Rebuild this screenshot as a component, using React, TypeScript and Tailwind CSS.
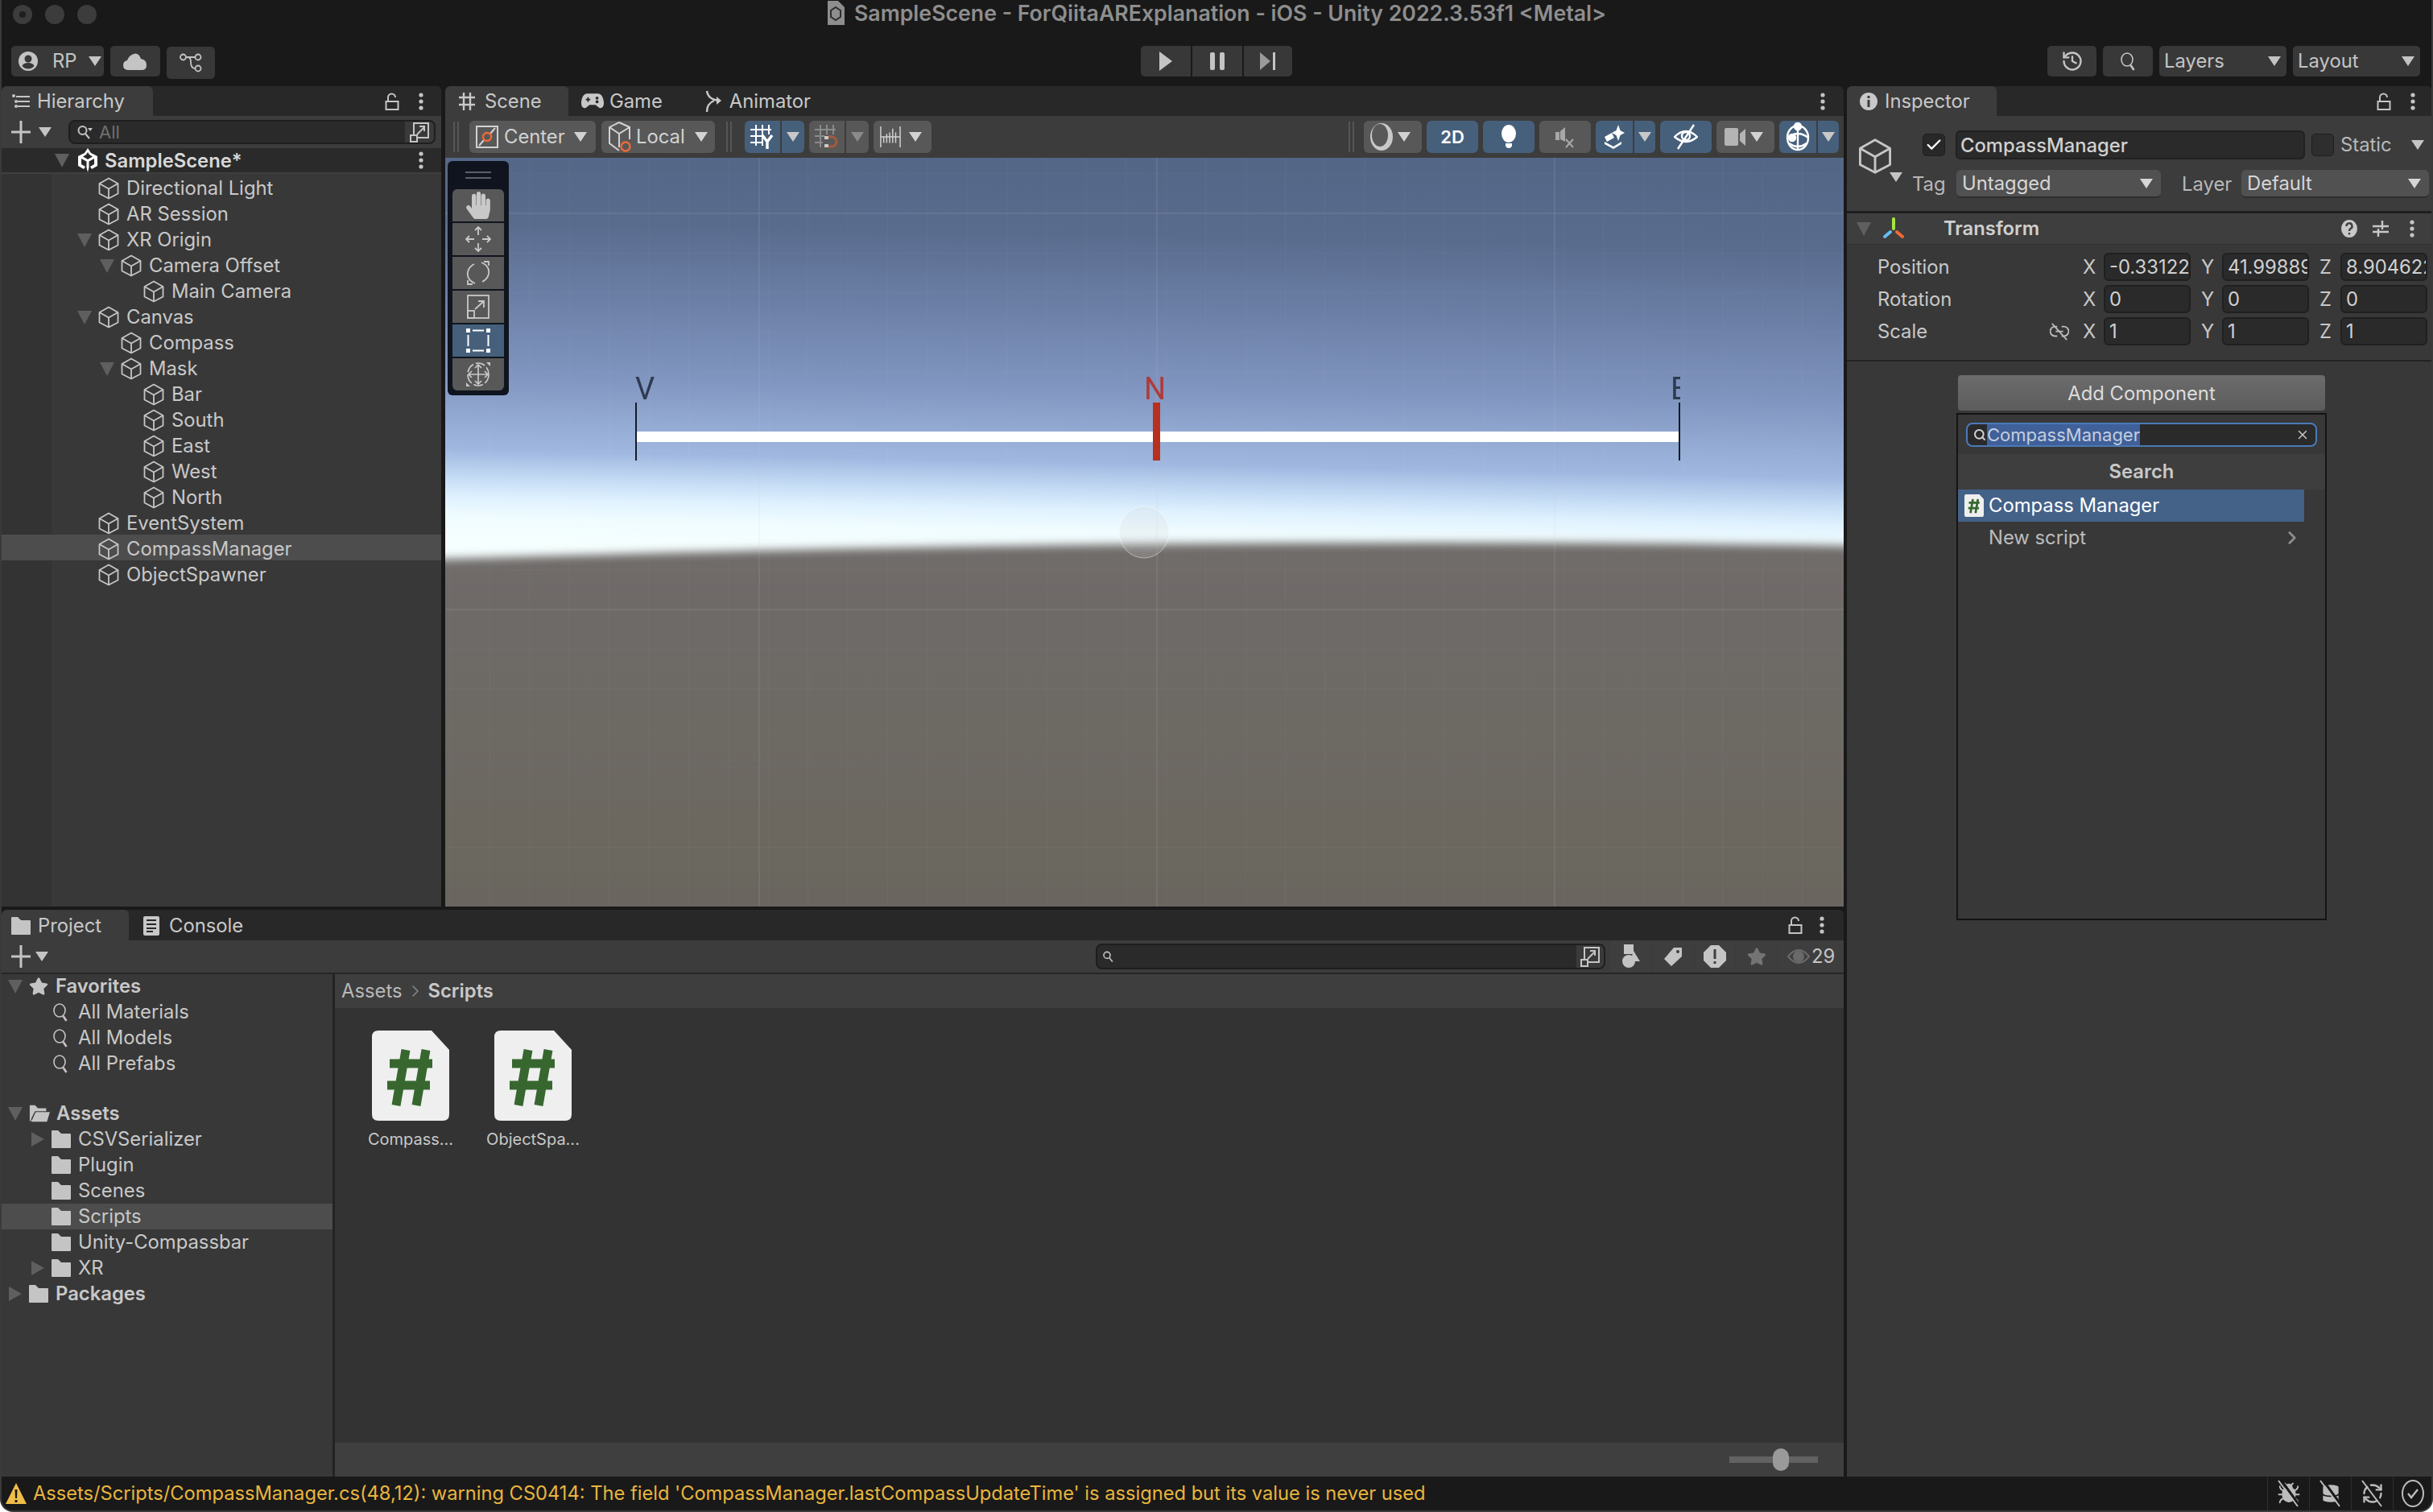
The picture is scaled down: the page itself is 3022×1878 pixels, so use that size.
import { Bug, Check, ChevronRight, Database, History, RefreshCw, Search, X } from "lucide-react";
import type { ReactNode } from "react";
import { FaHandPaper, FaStar } from "react-icons/fa";

const Caret = ({ className = "" }: { className?: string }) => (
  <svg viewBox="0 0 16 12" className={`w-[16px] h-[12px] shrink-0 ${className}`}>
    <path d="M0 0H16L8 12Z" fill="currentColor" />
  </svg>
);

const FoldDown = ({ className = "" }: { className?: string }) => (
  <svg viewBox="0 0 18 18" className={`w-[18px] h-[18px] shrink-0 text-[#5f5f5f] ${className}`}>
    <path d="M0 1H18L9 18Z" fill="currentColor" />
  </svg>
);

const FoldRight = ({ className = "" }: { className?: string }) => (
  <svg viewBox="0 0 18 18" className={`w-[18px] h-[18px] shrink-0 text-[#5f5f5f] ${className}`}>
    <path d="M1 0L17 9L1 18Z" fill="currentColor" />
  </svg>
);

const Kebab = ({ className = "" }: { className?: string }) => (
  <svg viewBox="0 0 6 24" className={`w-[6px] h-[24px] shrink-0 text-[#c4c4c4] ${className}`}>
    <circle cx="3" cy="4" r="2.6" fill="currentColor" />
    <circle cx="3" cy="12" r="2.6" fill="currentColor" />
    <circle cx="3" cy="20" r="2.6" fill="currentColor" />
  </svg>
);

const Lock = () => (
  <svg viewBox="0 0 18 22" className="w-[18px] h-[22px] shrink-0 text-[#c4c4c4]" fill="none" stroke="currentColor" strokeWidth="2">
    <rect x="1.5" y="11" width="15" height="10" />
    <path d="M4 11V6a4.5 4.5 0 0 1 9 0" />
  </svg>
);

const Plus = () => (
  <svg viewBox="0 0 24 28" className="w-[24px] h-[28px] shrink-0 text-[#c4c4c4]">
    <path d="M10.5 0h3v12.5H24v3H13.5V28h-3V15.5H0v-3h10.5z" fill="currentColor" />
  </svg>
);

const Cube = ({ className = "w-[26px] h-[28px]" }: { className?: string }) => (
  <svg viewBox="0 0 26 28" className={`shrink-0 text-[#c6c6c6] ${className}`} fill="none" stroke="currentColor" strokeWidth="1.8" strokeLinejoin="round">
    <path d="M13 1.5L24.5 8V20.5L13 26.5L1.5 20.5V8Z" />
    <path d="M1.5 8L13 14.5L24.5 8M13 14.5V26.5" />
  </svg>
);

const UnityLogo = () => (
  <svg viewBox="0 0 26 30" className="w-[26px] h-[30px] shrink-0 text-white">
    <path
      d="M13 0L17 6L25 10V22L18 26L16 23L21 20V13L14.5 16.5V24L13 30L11.5 24V16.5L5 13V20L10 23L8 26L1 22V10L9 6ZM13 5L11 8L7 10.5L13 14L19 10.5L15 8Z"
      fill="currentColor"
    />
  </svg>
);

const FindIcon = ({ caret = false, className = "w-[20px] h-[20px]" }: { caret?: boolean; className?: string }) => (
  <svg viewBox="0 0 20 20" className={`shrink-0 text-[#c4c4c4] ${className}`} fill="none" stroke="currentColor" strokeWidth="2">
    <circle cx="7.5" cy="8" r="5" />
    <path d="M11 12l5 6" />
    {caret && <path d="M14 5h6l-3 4z" fill="currentColor" stroke="none" />}
  </svg>
);

const ThinFind = () => (
  <svg viewBox="0 0 18 24" className="w-[22px] h-[24px] shrink-0 text-[#c4c4c4]" fill="none" stroke="currentColor" strokeWidth="1.6">
    <ellipse cx="8" cy="10" rx="7" ry="8" />
    <path d="M12.5 17l4 6" strokeWidth="2.6" />
  </svg>
);

const PopOut = () => (
  <svg viewBox="0 0 24 26" className="w-[24px] h-[26px] shrink-0 text-[#c4c4c4]" fill="none" stroke="currentColor" strokeWidth="2">
    <path d="M5 16V2h18v18H9" />
    <rect x="1" y="17" width="8" height="8" />
    <path d="M9 16L18 7M12 6h6v6" />
  </svg>
);

const Folder = ({ className = "" }: { className?: string }) => (
  <svg viewBox="0 0 24 24" className={`w-[24px] h-[24px] shrink-0 text-[#c4c4c4] ${className}`}>
    <path d="M0 2q0-1 1-1h7l4 4h11q1 0 1 1v16q0 1-1 1H1q-1 0-1-1z" fill="currentColor" />
  </svg>
);

const FolderOpen = () => (
  <svg viewBox="0 0 28 24" className="w-[26px] h-[24px] shrink-0 text-[#c4c4c4]">
    <path d="M1 1h7l4 4h11v4H8L3 19V22H1z" fill="currentColor" />
    <path d="M9 10h19l-4 13H3z" fill="currentColor" />
  </svg>
);

const CSharpFile = ({ className = "w-[96px] h-[112px]" }: { className?: string }) => (
  <svg viewBox="0 0 96 112" className={`shrink-0 ${className}`}>
    <path d="M8 0H74L96 24V104q0 8-8 8H8q-8 0-8-8V8q0-8 8-8Z" fill="#efefef" />
    <path d="M42 24L30 93M67 24L55 93M22 41H75M19 68H72" stroke="#37672f" strokeWidth="11" fill="none" />
  </svg>
);

const Slash = () => (
  <svg viewBox="0 0 30 36" className="absolute w-[30px] h-[36px]" fill="none">
    <path d="M5 1L29 34" stroke="#191919" strokeWidth="3" />
    <path d="M2 2L26 34" stroke="#bcbcbc" strokeWidth="2" />
  </svg>
);

function ToolBtn({ children, className = "" }: { children: ReactNode; className?: string }) {
  return (
    <div className={`h-[38px] rounded-[5px] bg-[#383838] flex items-center text-[#c4c4c4] text-[23.8px] ${className}`}>{children}</div>
  );
}

function Grip({ className = "" }: { className?: string }) {
  return (
    <div className={`w-[7px] h-[38px] shrink-0 flex justify-between ${className}`}>
      <span className="w-[2px] h-full bg-[#565656]" />
      <span className="w-[2px] h-full bg-[#565656]" />
    </div>
  );
}

function SceneBtn({ children, on = false, className = "" }: { children: ReactNode; on?: boolean; className?: string }) {
  return (
    <div
      className={`h-[40px] shrink-0 rounded-[6px] flex items-center justify-center text-[#d2d2d2] text-[23.8px] ${on ? "bg-[#46607c]" : "bg-[#585858]"} ${className}`}
    >
      {children}
    </div>
  );
}

function SplitBtn({
  left,
  on = false,
  dim = false,
  leftWidth = "w-[46px]",
  rightWidth = "w-[26px]",
}: {
  left: ReactNode;
  on?: boolean;
  dim?: boolean;
  leftWidth?: string;
  rightWidth?: string;
}) {
  const bg = on ? "bg-[#46607c]" : "bg-[#585858]";
  return (
    <div className="h-[40px] shrink-0 flex rounded-[6px] overflow-hidden gap-[2px] text-[#d2d2d2]">
      <div className={`${leftWidth} ${bg} flex items-center justify-center`}>{left}</div>
      <div className={`${rightWidth} ${bg} flex items-center justify-center`}>
        <Caret className={dim ? "text-[#8a8a8a]" : "text-[#c8c8c8]"} />
      </div>
    </div>
  );
}

function GizmoBtn({ children, on = false, top = false, bottom = false }: { children: ReactNode; on?: boolean; top?: boolean; bottom?: boolean }) {
  return (
    <div
      className={`w-[64px] h-[40px] flex items-center justify-center text-[#c8c8c8] ${on ? "bg-[#46607c] text-white" : "bg-[#585858]"} ${top ? "rounded-t-[6px]" : ""} ${bottom ? "rounded-b-[6px]" : ""}`}
    >
      {children}
    </div>
  );
}

function Tab({ icon, label, active = false, className = "" }: { icon: ReactNode; label: string; active?: boolean; className?: string }) {
  return (
    <div
      className={`h-full flex items-center text-[23.8px] text-[#c8c8c8] ${active ? "bg-[#3c3c3c] rounded-t-[6px]" : ""} ${className}`}
    >
      {icon}
      <span>{label}</span>
    </div>
  );
}

type Node = { name: string; level: number; open?: boolean; hover?: boolean };

const hierarchy: Node[] = [
  { name: "Directional Light", level: 1 },
  { name: "AR Session", level: 1 },
  { name: "XR Origin", level: 1, open: true },
  { name: "Camera Offset", level: 2, open: true },
  { name: "Main Camera", level: 3 },
  { name: "Canvas", level: 1, open: true },
  { name: "Compass", level: 2 },
  { name: "Mask", level: 2, open: true },
  { name: "Bar", level: 3 },
  { name: "South", level: 3 },
  { name: "East", level: 3 },
  { name: "West", level: 3 },
  { name: "North", level: 3 },
  { name: "EventSystem", level: 1 },
  { name: "CompassManager", level: 1, hover: true },
  { name: "ObjectSpawner", level: 1 },
];

function Hierarchy() {
  return (
    <div className="w-[546px] shrink-0 flex flex-col bg-[#383838] rounded-t-[6px] overflow-hidden">
      <div className="h-[37px] bg-[#282828] flex items-center shrink-0">
        <Tab
          active
          label="Hierarchy"
          className="w-[188px] pl-[13px] gap-[9px]"
          icon={
            <svg viewBox="0 0 22 18" className="w-[22px] h-[18px] text-[#c4c4c4]" fill="currentColor">
              <path d="M5 2h17v2H5zM7 8h15v2H7zM7 14h15v2H7z" />
              <circle cx="2" cy="2" r="2" />
              <circle cx="5" cy="9" r="2" />
              <circle cx="5" cy="15" r="2" />
            </svg>
          }
        />
        <div className="flex-1" />
        <Lock />
        <Kebab className="ml-[24px] mr-[22px]" />
      </div>
      <div className="h-[40px] bg-[#3c3c3c] shrink-0 flex items-center pl-[12px] pr-[7px]">
        <Plus />
        <Caret className="ml-[10px] text-[#c4c4c4]" />
        <div className="ml-[21px] flex-1 h-[30px] rounded-[8px] bg-[#2a2a2a] border-2 border-[#1e1e1e] flex items-center pl-[8px] overflow-hidden">
          <FindIcon caret />
          <span className="ml-[8px] text-[22px] text-[#6f6f6f]">All</span>
          <div className="flex-1" />
          <div className="w-[36px] h-full bg-[#3a3a3a] flex items-center justify-center">
            <PopOut />
          </div>
        </div>
      </div>
      <div className="h-[32px] bg-[#2a2a2a] border-b-2 border-[#3f3f3f] shrink-0 flex items-center pl-[66px] pr-[22px]">
        <FoldDown />
        <span className="ml-[10px]">
          <UnityLogo />
        </span>
        <span className="ml-[8px] pt-[2px] text-[23.8px] font-semibold text-[#d8d8d8]">SampleScene*</span>
        <div className="flex-1" />
        <Kebab />
      </div>
      <div className="flex-1 bg-[linear-gradient(to_right,#333333_62px,#383838_62px)]">
        {hierarchy.map((n) => (
          <div
            key={n.name}
            className={`h-[32px] pt-[3px] flex items-center text-[23.8px] text-[#c8c8c8] relative ${n.hover ? "bg-[#4d4d4d]" : ""}`}
            style={{ paddingLeft: 120 + (n.level - 1) * 28 }}
          >
            {n.open && <FoldDown className="-ml-[26px] mr-[8px]" />}
            <Cube />
            <span className="ml-[9px]">{n.name}</span>
          </div>
        ))}
      </div>
    </div>
  );
}

const HashIcon = () => (
  <svg viewBox="0 0 22 24" className="w-[22px] h-[24px] text-[#c8c8c8]" stroke="currentColor" strokeWidth="2.4" fill="none">
    <path d="M7 1V23M15 1V23M1 7H21M1 16H21" />
  </svg>
);

function SkyView() {
  const minorX = Array.from({ length: 36 }, (_, i) => 553 + 6 + i * 49.4);
  const minorY = Array.from({ length: 19 }, (_, i) => 216 + i * 49.2);
  return (
    <svg viewBox="553 196 1737 930" className="absolute inset-0 w-full h-full" preserveAspectRatio="none">
      <defs>
        <linearGradient id="sky" gradientUnits="userSpaceOnUse" x1="1445" y1="196" x2="1435" y2="690">
          <stop offset="0" stopColor="#546686" />
          <stop offset="0.2" stopColor="#5a6c8e" />
          <stop offset="0.38" stopColor="#6b7fa6" />
          <stop offset="0.58" stopColor="#8095bf" />
          <stop offset="0.77" stopColor="#a0b8e0" />
          <stop offset="0.84" stopColor="#c5dcf5" />
          <stop offset="0.89" stopColor="#e0f2ff" />
          <stop offset="0.94" stopColor="#f0fcff" />
          <stop offset="1" stopColor="#f6ffff" />
        </linearGradient>
        <linearGradient id="ground" gradientUnits="userSpaceOnUse" x1="1400" y1="680" x2="1400" y2="1126">
          <stop offset="0" stopColor="#6f6c6a" />
          <stop offset="1" stopColor="#6b665e" />
        </linearGradient>
        <filter id="soft" x="-5%" y="-5%" width="110%" height="110%">
          <feGaussianBlur stdDeviation="6" />
        </filter>
      </defs>
      <rect x="553" y="196" width="1737" height="930" fill="url(#sky)" />
      <path d="M440 698Q1500 662 2400 680V1240H440Z" fill="url(#ground)" filter="url(#soft)" />
      {minorX.map((x) => (
        <line key={x} x1={x} x2={x} y1="196" y2="1126" stroke="#ffffff" strokeOpacity="0.035" strokeWidth="1" />
      ))}
      {minorY.map((y) => (
        <line key={y} x1="553" x2="2290" y1={y} y2={y} stroke="#ffffff" strokeOpacity="0.035" strokeWidth="1" />
      ))}
      {[943, 1437, 1931].map((x) => (
        <line key={x} x1={x} x2={x} y1="196" y2="1126" stroke="#c8c8c8" strokeOpacity="0.22" strokeWidth="1" />
      ))}
      {[265, 757].map((y) => (
        <line key={y} x1="553" x2="2290" y1={y} y2={y} stroke="#c8c8c8" strokeOpacity="0.18" strokeWidth="1" />
      ))}
      <ellipse cx="1421" cy="661" rx="31" ry="32" fill="#d0d0d0" fillOpacity="0.2" stroke="#ffffff" strokeOpacity="0.45" strokeWidth="1" />
    </svg>
  );
}

function CompassBar() {
  return (
    <div className="absolute left-[236px] top-[253px] w-[1298px] h-[126px] overflow-hidden">
      <span className="absolute left-0 top-[10px] text-[38px] leading-[48px] font-[Roboto,sans-serif] text-[#2e3a50] blur-[0.6px]">V</span>
      <span className="absolute left-[632px] top-[10px] text-[38px] leading-[48px] font-[Roboto,sans-serif] text-[#b03a3a] blur-[0.6px]">N</span>
      <span className="absolute left-[1286px] top-[10px] text-[38px] leading-[48px] font-[Roboto,sans-serif] text-[#2e3a50] blur-[0.6px]">E</span>
      <div className="absolute left-0 right-0 top-[87px] h-[13px] bg-white" />
      <div className="absolute left-0 top-[51px] w-[2px] h-[72px] bg-[#151b26]" />
      <div className="absolute left-[643px] top-[51px] w-[9px] h-[72px] bg-[#b8301e]" />
      <div className="absolute right-0 top-[51px] w-[2px] h-[72px] bg-[#151b26]" />
    </div>
  );
}

function GizmoBar() {
  return (
    <div className="absolute left-[3px] top-[4px] w-[76px] h-[291px] rounded-[6px] bg-[#0f141e] px-[6px] flex flex-col">
      <div className="h-[35px] flex flex-col items-center justify-center gap-[5px]">
        <span className="w-[32px] h-[2px] bg-[#5a5f68]" />
        <span className="w-[32px] h-[2px] bg-[#5a5f68]" />
      </div>
      <div className="flex flex-col gap-[2px]">
        <GizmoBtn top>
          <FaHandPaper className="w-[30px] h-[34px]" />
        </GizmoBtn>
        <GizmoBtn>
          <svg viewBox="0 0 32 32" className="w-[32px] h-[32px]" fill="none" stroke="currentColor" strokeWidth="1.8">
            <path d="M16 1V11M16 21V31M1 16H11M21 16H31M12 5l4-4 4 4M12 27l4 4 4-4M5 12l-4 4 4 4M27 12l4 4-4 4" />
          </svg>
        </GizmoBtn>
        <GizmoBtn>
          <svg viewBox="0 0 30 30" className="w-[30px] h-[30px]" fill="none" stroke="currentColor" strokeWidth="1.8">
            <path d="M11 28C4 25 1 20 2 14 3 9 6 6 10 4M19 2C26 5 29 10 28 16 27 21 24 24 20 26M22 1H28V6M2 24V29H8" />
          </svg>
        </GizmoBtn>
        <GizmoBtn>
          <svg viewBox="0 0 30 30" className="w-[30px] h-[30px]" fill="none" stroke="currentColor" strokeWidth="1.8">
            <rect x="2" y="1" width="26" height="28" />
            <rect x="2" y="20" width="8" height="9" />
            <path d="M11 18L22 8M15 8h7v8" />
          </svg>
        </GizmoBtn>
        <GizmoBtn on>
          <svg viewBox="0 0 30 30" className="w-[30px] h-[30px]" fill="currentColor">
            <path d="M0 0h5v5H0zM25 0h5v5h-5zM0 25h5v5H0zM25 25h5v5h-5zM8 1.500h14v2H8zM8 26.500h14v2H8zM1.500 8h2v14h-2zM26.500 8h2v14h-2z" />
          </svg>
        </GizmoBtn>
        <GizmoBtn bottom>
          <svg viewBox="0 0 32 32" className="w-[32px] h-[32px]" fill="none" stroke="currentColor" strokeWidth="1.7">
            <ellipse cx="16" cy="16" rx="13" ry="14" strokeDasharray="12 3" />
            <path d="M16 4V28M4 16H28M12 8l4-4 4 4M12 24l4 4 4-4M8 12l-4 4 4 4M24 12l4 4-4 4" />
            <path d="M26 1H31V6ZM1 31V26L6 31Z" fill="currentColor" stroke="none" />
          </svg>
        </GizmoBtn>
      </div>
    </div>
  );
}

function SceneToolbar() {
  return (
    <div className="h-[52px] shrink-0 bg-[#3c3c3c] flex items-center pl-[10px] pr-[6px]">
      <Grip />
      <SceneBtn className="ml-[13px] w-[157px] pl-[8px] justify-start">
        <svg viewBox="0 0 28 28" className="w-[28px] h-[28px] shrink-0" fill="none" strokeWidth="2">
          <rect x="1" y="1" width="26" height="26" stroke="#d2d2d2" />
          <path d="M4 25L10 18M18 10L24 3" stroke="#d2d2d2" />
          <circle cx="14" cy="14" r="5" stroke="#f06a35" strokeWidth="2.4" />
        </svg>
        <span className="ml-[7px]">Center</span>
        <Caret className="ml-[11px]" />
      </SceneBtn>
      <SceneBtn className="ml-[7px] w-[141px] pl-[8px] justify-start">
        <svg viewBox="0 0 30 42" className="w-[30px] h-[42px] shrink-0" fill="none" strokeWidth="2">
          <path d="M14 3L27 9V24M14 3L2 9V29L14 38M2 9L14 17L27 9M14 17V34" stroke="#d2d2d2" />
          <circle cx="22" cy="33" r="5.500" stroke="#f06a35" strokeWidth="2.4" />
        </svg>
        <span className="ml-[5px]">Local</span>
        <Caret className="ml-[12px]" />
      </SceneBtn>
      <Grip className="ml-[14px]" />
      <div className="ml-[16px]">
        <SplitBtn
          on
          leftWidth="w-[44px]"
          rightWidth="w-[28px]"
          left={
            <svg viewBox="0 0 30 30" className="w-[30px] h-[30px] text-white" fill="none" stroke="currentColor" strokeWidth="2">
              <path d="M7 0V26M15 0V26M23 0V12M0 6H26M0 14H14M0 22H14" />
              <path d="M15 13L21 21L27 13M21 21V30" strokeWidth="3.4" />
            </svg>
          }
        />
      </div>
      <div className="ml-[6px]">
        <SplitBtn
          dim
          leftWidth="w-[44px]"
          rightWidth="w-[28px]"
          left={
            <svg viewBox="0 0 30 30" className="w-[30px] h-[30px]" fill="none" stroke="#8a8a8a" strokeWidth="2">
              <path d="M7 0V28M15 0V12M23 0V12M0 6H26M0 14H12M0 22H10" />
              <path d="M16 15h5a6 6 0 0 1 0 12h-5" stroke="#a45a3c" strokeWidth="3" />
              <path d="M12 14h5v4h-5zM12 24h5v4h-5z" fill="#c8c8c8" stroke="none" />
            </svg>
          }
        />
      </div>
      <SceneBtn className="ml-[6px] w-[72px] pl-[8px] justify-start">
        <svg viewBox="0 0 28 28" className="w-[26px] h-[28px] shrink-0" fill="none" stroke="#d2d2d2" strokeWidth="1.6">
          <path d="M1 0V28M27 0V28M5 14V22M9 10V22M13 8V22M17 3V22M21 8V22M1 14H27" />
        </svg>
        <Caret className="ml-[10px]" />
      </SceneBtn>
      <div className="flex-1" />
      <Grip className="mr-[12px]" />
      <SceneBtn className="w-[72px] pl-[8px] justify-start">
        <svg viewBox="0 0 30 34" className="w-[30px] h-[34px] shrink-0">
          <ellipse cx="14" cy="17" rx="14" ry="17" fill="#c8c8c8" />
          <ellipse cx="12" cy="15" rx="10" ry="14" fill="#585858" />
        </svg>
        <Caret className="ml-[4px]" />
      </SceneBtn>
      <SceneBtn on className="ml-[6px] w-[64px] font-semibold">
        <span className="text-[22px] text-white">2D</span>
      </SceneBtn>
      <SceneBtn on className="ml-[6px] w-[64px]">
        <svg viewBox="0 0 20 30" className="w-[20px] h-[30px] text-white">
          <ellipse cx="10" cy="11" rx="9" ry="11" fill="currentColor" />
          <path d="M6 23h8v3q-1 3-4 3t-4-3z" fill="currentColor" />
        </svg>
      </SceneBtn>
      <SceneBtn className="ml-[6px] w-[64px]">
        <svg viewBox="0 0 24 28" className="w-[24px] h-[28px]" fill="#a8a8a8">
          <path d="M0 8h5V18H0zM6 7L12 2V20L6 17z" />
          <path d="M13 17l9 10M22 17l-9 10" stroke="#a8a8a8" strokeWidth="2" />
        </svg>
      </SceneBtn>
      <div className="ml-[6px]">
        <SplitBtn
          on
          left={
            <svg viewBox="0 0 26 30" className="w-[26px] h-[30px] text-white" fill="currentColor">
              <path d="M18 0l2.500 7 5.500 3-5.500 3-2.500 7-2.500-7L10 10l5.500-3z" />
              <path d="M1 15l9-5 3 6-9 5zM1 21l11 6 10-6v3l-10 6-11-6z" />
            </svg>
          }
        />
      </div>
      <SceneBtn on className="ml-[6px] w-[64px]">
        <svg viewBox="0 0 30 32" className="w-[30px] h-[32px] text-white" fill="none" stroke="currentColor" strokeWidth="2.4">
          <path d="M1 16Q15 2 29 16 15 28 1 16Z" />
          <circle cx="15" cy="15" r="5" />
          <path d="M25 1L5 31" />
        </svg>
      </SceneBtn>
      <SceneBtn className="ml-[6px] w-[72px] pl-[10px] justify-start">
        <svg viewBox="0 0 26 22" className="w-[26px] h-[22px] shrink-0" fill="#b4b4b4">
          <rect x="0" y="0" width="17" height="22" rx="2" />
          <path d="M19 7l7-6V22l-7-6z" />
        </svg>
        <Caret className="ml-[6px]" />
      </SceneBtn>
      <div className="ml-[6px]">
        <SplitBtn
          on
          left={
            <svg viewBox="0 0 30 36" className="w-[30px] h-[36px] text-white" fill="none" stroke="currentColor" strokeWidth="2.4">
              <ellipse cx="15" cy="19" rx="13" ry="15" />
              <path d="M15 4V34M2 19Q15 9 28 19M4 26Q15 34 26 26" />
              <circle cx="15" cy="5" r="4" fill="currentColor" />
              <circle cx="8" cy="19" r="4" fill="currentColor" />
            </svg>
          }
        />
      </div>
    </div>
  );
}

function ScenePanel() {
  return (
    <div className="flex-1 flex flex-col rounded-t-[6px] overflow-hidden">
      <div className="h-[37px] bg-[#282828] shrink-0 flex items-center">
        <Tab active label="Scene" icon={<HashIcon />} className="w-[153px] pl-[16px] gap-[11px]" />
        <Tab
          label="Game"
          className="pl-[16px] gap-[7px]"
          icon={
            <svg viewBox="0 0 30 22" className="w-[28px] h-[21px] text-[#c8c8c8]">
              <path d="M8 1H22C27 1 30 7 30 14 30 19 27 21 24 20L19 16H11L6 20C3 21 0 19 0 14 0 7 3 1 8 1Z" fill="currentColor" />
              <path d="M6 9H12M9 6V12" stroke="#282828" strokeWidth="2" />
              <circle cx="21" cy="7" r="2" fill="#282828" />
              <circle cx="21" cy="12" r="2" fill="#282828" />
            </svg>
          }
        />
        <Tab
          label="Animator"
          className="ml-[52px] gap-[9px]"
          icon={
            <svg viewBox="0 0 22 28" className="w-[22px] h-[28px] text-[#c8c8c8]" fill="none" stroke="currentColor" strokeWidth="2.4">
              <path d="M3 1C4 8 8 12 19 13M3 27C3 20 7 15 12 13" />
              <path d="M15 8L21 13L15 18Z" fill="currentColor" stroke="none" />
            </svg>
          }
        />
        <div className="flex-1" />
        <Kebab className="mr-[23px]" />
      </div>
      <SceneToolbar />
      <div className="flex-1 relative overflow-hidden">
        <SkyView />
        <CompassBar />
        <GizmoBar />
      </div>
    </div>
  );
}

const favorites = ["All Materials", "All Models", "All Prefabs"];

function ProjectTree() {
  const assetRows = [
    { name: "CSVSerializer", fold: true },
    { name: "Plugin" },
    { name: "Scenes" },
    { name: "Scripts", selected: true },
    { name: "Unity-Compassbar" },
    { name: "XR", fold: true },
  ];
  return (
    <div className="w-[411px] shrink-0 bg-[#383838] text-[23.8px] text-[#c8c8c8]">
      <div className="h-[32px] -mt-[1px] flex items-center pl-[8px]">
        <FoldDown />
        <FaStar className="ml-[8px] w-[24px] h-[24px] text-[#c4c4c4]" />
        <span className="ml-[9px] font-semibold">Favorites</span>
      </div>
      {favorites.map((f) => (
        <div key={f} className="h-[32px] flex items-center pl-[62px]">
          <ThinFind />
          <span className="ml-[11px]">{f}</span>
        </div>
      ))}
      <div className="h-[30px]" />
      <div className="h-[32px] flex items-center pl-[8px]">
        <FoldDown />
        <div className="ml-[8px]">
          <FolderOpen />
        </div>
        <span className="ml-[8px] font-semibold">Assets</span>
      </div>
      {assetRows.map((r) => (
        <div key={r.name} className={`h-[32px] flex items-center pl-[36px] ${r.selected ? "bg-[#4d4d4d]" : ""}`}>
          {r.fold ? <FoldRight /> : <span className="w-[18px]" />}
          <Folder className="ml-[8px]" />
          <span className="ml-[9px]">{r.name}</span>
        </div>
      ))}
      <div className="h-[32px] flex items-center pl-[8px]">
        <FoldRight />
        <Folder className="ml-[8px]" />
        <span className="ml-[9px] font-semibold">Packages</span>
      </div>
    </div>
  );
}

function FilterBtn({ children }: { children: ReactNode }) {
  return <div className="w-[50px] h-full bg-[#3e3e3e] flex items-center justify-center shrink-0">{children}</div>;
}

function ProjectPanel() {
  return (
    <div className="flex-1 flex flex-col rounded-t-[6px] overflow-hidden">
      <div className="h-[38px] bg-[#282828] shrink-0 flex items-center">
        <Tab active label="Project" className="w-[158px] pl-[12px] pt-[2px] gap-[9px]" icon={<Folder />} />
        <Tab
          label="Console"
          className="ml-[18px] pt-[2px] gap-[12px]"
          icon={
            <svg viewBox="0 0 20 24" className="w-[20px] h-[24px] text-[#c8c8c8]">
              <path d="M2 0H18Q20 0 20 2V22Q20 24 18 24H2Q0 24 0 22V2Q0 0 2 0Z" fill="currentColor" />
              <path d="M4 5H16M4 10H16M4 15H16M4 19H12" stroke="#282828" strokeWidth="1.8" />
            </svg>
          }
        />
        <div className="flex-1" />
        <Lock />
        <Kebab className="ml-[21px] mr-[24px]" />
      </div>
      <div className="h-[42px] bg-[#3c3c3c] border-b-2 border-[#262626] shrink-0 flex items-center pl-[12px]">
        <Plus />
        <Caret className="ml-[6px] text-[#c4c4c4]" />
        <div className="ml-[1301px] w-[633px] h-[32px] rounded-[8px] bg-[#2a2a2a] border-2 border-[#1e1e1e] flex items-center pl-[6px] overflow-hidden">
          <FindIcon className="w-[16px] h-[16px]" />
          <div className="flex-1" />
          <div className="w-[34px] h-full bg-[#3a3a3a] flex items-center justify-center">
            <PopOut />
          </div>
        </div>
        <div className="ml-[7px] flex gap-[2px] h-full">
          <FilterBtn>
            <svg viewBox="0 0 26 30" className="w-[26px] h-[30px] text-[#c4c4c4]" fill="currentColor">
              <rect x="4" y="0" width="12" height="12" />
              <path d="M16 8l8 13H12z" />
              <circle cx="10" cy="21" r="8" />
            </svg>
          </FilterBtn>
          <FilterBtn>
            <svg viewBox="0 0 24 24" className="w-[24px] h-[24px] text-[#c4c4c4]">
              <path d="M13 1H23V12L10 24L1 15Z" fill="currentColor" />
              <circle cx="18" cy="6" r="2" fill="#3e3e3e" />
            </svg>
          </FilterBtn>
          <FilterBtn>
            <svg viewBox="0 0 28 28" className="w-[28px] h-[28px] text-[#c4c4c4]">
              <path d="M9 0H19L28 9V19L19 28H9L0 19V9Z" fill="currentColor" />
              <path d="M12.500 5H15.500V17H12.500ZM12.500 20H15.500V23H12.500Z" fill="#3e3e3e" />
            </svg>
          </FilterBtn>
          <FilterBtn>
            <FaStar className="w-[24px] h-[26px] text-[#747474]" />
          </FilterBtn>
          <div className="w-[81px] bg-[#3e3e3e] flex items-center pl-[11px] gap-[2px] text-[23.8px] text-[#c4c4c4]">
            <svg viewBox="0 0 28 24" className="w-[28px] h-[24px] text-[#6a6a6a]" fill="none" stroke="currentColor" strokeWidth="2">
              <path d="M1 12Q14 -4 27 12 14 28 1 12Z" />
              <circle cx="14" cy="12" r="6" fill="currentColor" />
            </svg>
            <span>29</span>
          </div>
        </div>
      </div>
      <div className="flex-1 flex">
        <ProjectTree />
        <div className="w-[3px] bg-[#232323] shrink-0" />
        <div className="flex-1 bg-[#333333] flex flex-col">
          <div className="h-[42px] bg-[#3e3e3e] shrink-0 flex items-center pl-[8px] text-[23.8px]">
            <span className="text-[#b8b8b8]">Assets</span>
            <ChevronRight className="ml-[4px] w-[24px] h-[28px] text-[#8a8a8a]" strokeWidth={1.5} />
            <span className="ml-[4px] font-semibold text-[#c8c8c8]">Scripts</span>
          </div>
          <div className="flex-1 flex gap-[56px] pl-[46px] pt-[28px]">
            <div className="w-[96px] flex flex-col items-center">
              <CSharpFile />
              <span className="mt-[8px] text-[20px] text-[#c8c8c8] whitespace-nowrap">Compass...</span>
            </div>
            <div className="w-[96px] flex flex-col items-center">
              <CSharpFile />
              <span className="mt-[8px] text-[20px] text-[#c8c8c8] whitespace-nowrap">ObjectSpa...</span>
            </div>
          </div>
          <div className="h-[42px] bg-[#3f3f3f] shrink-0 flex items-center justify-end pr-[32px]">
            <div className="w-[110px] h-[8px] bg-[#626262] relative">
              <span className="absolute left-[54px] -top-[10px] w-[20px] h-[28px] rounded-full bg-[#9a9a9a]" />
            </div>
          </div>
        </div>
      </div>
    </div>
  );
}

function NumField({ value }: { value: string }) {
  return (
    <div className="w-[108px] h-[35px] rounded-[6px] bg-[#2a2a2a] border-2 border-[#202020] flex items-center pl-[5px] pr-[2px] text-[23.8px] text-[#d0d0d0] overflow-hidden whitespace-nowrap shrink-0">
      {value}
    </div>
  );
}

function VectorRow({ label, values, linked }: { label: string; values: string[]; linked?: boolean }) {
  return (
    <div className="h-[35px] flex items-center text-[23.8px] text-[#c8c8c8] mb-[5px]">
      <span className="ml-[38px] w-[214px]">{label}</span>
      <span className="w-[34px] flex items-center">
        {linked && (
          <svg viewBox="0 0 26 24" className="w-[24px] h-[22px] text-[#bcbcbc]" fill="none" stroke="currentColor" strokeWidth="2">
            <path d="M10 5H7a6 6 0 0 0 0 13h3M16 5h3a6 6 0 0 1 0 13h-3M8 11.500H18M3 1L23 23" />
          </svg>
        )}
      </span>
      <span className="w-[26px] ml-[7px]">X</span>
      <NumField value={values[0]} />
      <span className="w-[26px] ml-[13px]">Y</span>
      <NumField value={values[1]} />
      <span className="w-[26px] ml-[13px]">Z</span>
      <NumField value={values[2]} />
    </div>
  );
}

function SelectBox({ label, className = "" }: { label: string; className?: string }) {
  return (
    <div className={`h-[35px] rounded-[6px] bg-[#515151] border-b-2 border-[#2e2e2e] flex items-center justify-between pl-[7px] pr-[10px] text-[23.8px] text-[#d6d6d6] ${className}`}>
      <span>{label}</span>
      <Caret />
    </div>
  );
}

function AddPopup() {
  return (
    <div className="absolute left-[136px] top-[406px] w-[460px] h-[630px] border-2 border-[#141414] bg-[#383838] flex flex-col text-[23.8px]">
      <div className="h-[49px] shrink-0 flex items-center justify-center">
        <div className="w-[436px] h-[30px] rounded-[8px] border-2 border-[#4a7ab8] bg-[#2a2a2a] flex items-center pl-[7px] pr-[7px]">
          <Search className="w-[16px] h-[16px] text-[#d0d0d0] shrink-0" strokeWidth={3} />
          <span className="bg-[#40609a] text-[#c4cede] text-[22px] leading-[26px] ml-[1px]">CompassManager</span>
          <div className="flex-1" />
          <X className="w-[18px] h-[18px] text-[#c4c4c4]" strokeWidth={2} />
        </div>
      </div>
      <div className="h-[44px] shrink-0 bg-[#3e3e3e] flex items-center justify-center font-semibold text-[#c8c8c8]">Search</div>
      <div className="h-[40px] w-[430px] shrink-0 bg-[#446188] flex items-center pl-[8px] text-white">
        <CSharpFile className="w-[24px] h-[28px]" />
        <span className="ml-[6px]">Compass Manager</span>
      </div>
      <div className="h-[40px] w-[430px] shrink-0 flex items-center justify-between pl-[38px] pr-[2px] text-[#bcbcbc]">
        <span>New script</span>
        <ChevronRight className="w-[26px] h-[28px] text-[#8e8e8e]" strokeWidth={2.5} />
      </div>
    </div>
  );
}

function Inspector() {
  return (
    <div className="w-[726px] shrink-0 flex flex-col bg-[#383838] rounded-t-[6px] overflow-hidden relative">
      <div className="h-[37px] shrink-0 bg-[#282828] flex items-center">
        <Tab
          active
          label="Inspector"
          className="w-[186px] pl-[16px] gap-[9px]"
          icon={
            <svg viewBox="0 0 22 22" className="w-[22px] h-[22px] text-[#c8c8c8]">
              <circle cx="11" cy="11" r="11" fill="currentColor" />
              <path d="M9.500 4h3v3h-3zM9.500 9h3v9h-3z" fill="#3c3c3c" />
            </svg>
          }
        />
        <div className="flex-1" />
        <Lock />
        <Kebab className="ml-[24px] mr-[20px]" />
      </div>
      <div className="h-[118px] shrink-0 bg-[#3c3c3c] flex">
        <div className="w-[78px] shrink-0 pl-[14px] pt-[22px] relative">
          <Cube className="w-[42px] h-[56px]" />
          <Caret className="absolute left-[53px] top-[70px] text-[#c4c4c4]" />
        </div>
        <div className="flex-1 flex flex-col">
          <div className="h-[36px] mt-[18px] flex items-center text-[23.8px]">
            <div className="ml-[16px] w-[28px] h-[28px] rounded-[5px] bg-[#282828] border border-[#1e1e1e] flex items-center justify-center shrink-0">
              <Check className="w-[22px] h-[22px] text-white" strokeWidth={2.5} />
            </div>
            <div className="ml-[13px] w-[434px] h-[36px] rounded-[6px] bg-[#2a2a2a] border-2 border-[#202020] flex items-center pl-[4px] pt-[2px] text-[#d0d0d0] font-medium">
              CompassManager
            </div>
            <div className="ml-[8px] w-[28px] h-[28px] rounded-[5px] bg-[#2e2e2e] border border-[#1e1e1e] shrink-0" />
            <span className="ml-[8px] text-[#b8b8b8]">Static</span>
            <Caret className="ml-[24px] text-[#c4c4c4]" />
          </div>
          <div className="h-[35px] mt-[13px] flex items-center text-[23.8px] text-[#b8b8b8]">
            <span className="w-[55px] ml-[3px]">Tag</span>
            <SelectBox label="Untagged" className="w-[254px]" />
            <span className="ml-[26px] w-[74px]">Layer</span>
            <SelectBox label="Default" className="w-[233px]" />
          </div>
        </div>
      </div>
      <div className="h-[3px] shrink-0 bg-[#1f1f1f]" />
      <div className="h-[39px] shrink-0 bg-[#3e3e3e] border-b border-[#333333] flex items-center pl-[12px] pr-[21px] text-[23.8px]">
        <FoldDown />
        <svg viewBox="0 0 28 30" className="ml-[14px] w-[28px] h-[30px] shrink-0" fill="none" strokeWidth="4" strokeLinecap="round">
          <path d="M14 3V15" stroke="#a5e640" />
          <path d="M10 19L3 25" stroke="#68bcf0" />
          <path d="M18 19L25 25" stroke="#f06a35" />
        </svg>
        <span className="ml-[48px] font-semibold text-[#cfcfcf]">Transform</span>
        <div className="flex-1" />
        <svg viewBox="0 0 20 22" className="w-[20px] h-[22px] text-[#c8c8c8]">
          <ellipse cx="10" cy="11" rx="10" ry="11" fill="currentColor" />
          <path d="M6.500 8a3.500 3.500 0 1 1 5 3q-1.500 1-1.500 3" stroke="#3e3e3e" strokeWidth="2.4" fill="none" />
          <rect x="8.800" y="16" width="2.400" height="2.400" fill="#3e3e3e" />
        </svg>
        <svg viewBox="0 0 20 22" className="ml-[19px] w-[20px] h-[22px] text-[#c8c8c8]" fill="none" stroke="currentColor" strokeWidth="2.4">
          <path d="M0 8H20M0 15H20M12 1V12M7 11V21" />
        </svg>
        <Kebab className="ml-[26px]" />
      </div>
      <div className="h-[145px] shrink-0 pt-[10px] border-b-2 border-[#232323]">
        <VectorRow label="Position" values={["-0.331225", "41.998891", "8.904622"]} />
        <VectorRow label="Rotation" values={["0", "0", "0"]} />
        <VectorRow label="Scale" values={["1", "1", "1"]} linked />
      </div>
      <div className="mt-[17px] ml-[138px] w-[456px] h-[44px] pt-[2px] rounded-[4px] bg-[linear-gradient(to_bottom,#6c6c6c,#5c5c5c)] flex items-center justify-center text-[23.8px] text-[#dcdcdc]">
        Add Component
      </div>
      <AddPopup />
    </div>
  );
}

export default function App() {
  return (
    <div className="w-[3022px] h-[1878px] bg-[#191919] overflow-hidden flex flex-col font-['Inter','Noto_Sans',sans-serif] border-x-2 border-b-2 border-[#3a3a3a] rounded-b-[16px]">
      <div className="h-[35px] shrink-0 grid grid-cols-[1fr_auto_1fr] items-start">
        <div className="flex items-center gap-[16px] pl-[14px] pt-[6px]">
          <span className="w-[24px] h-[24px] rounded-full bg-[#3c3c3c] flex items-center justify-center">
            <span className="w-[8px] h-[8px] rounded-full bg-[#1e1e1e]" />
          </span>
          <span className="w-[24px] h-[24px] rounded-full bg-[#3c3c3c]" />
          <span className="w-[24px] h-[24px] rounded-full bg-[#3c3c3c]" />
        </div>
        <div className="flex items-center gap-[12px] text-[26.7px] leading-[32px] font-semibold text-[#8e8e8e]">
          <svg viewBox="0 0 22 30" className="w-[22px] h-[30px]">
            <path d="M1 0H14L22 8V30H1Z" fill="#8e8e8e" />
            <path d="M11 8L17 12V20L11 24L5 20V12Z" fill="none" stroke="#2e2e2e" strokeWidth="2" />
          </svg>
          <span>SampleScene - ForQiitaARExplanation - iOS - Unity 2022.3.53f1 &lt;Metal&gt;</span>
        </div>
        <div />
      </div>

      <div className="h-[72px] shrink-0 grid grid-cols-[1fr_auto_1fr] pt-[22px]">
        <div className="flex items-start pl-[12px]">
          <ToolBtn className="w-[115px] pl-[9px]">
            <svg viewBox="0 0 24 24" className="w-[24px] h-[24px] shrink-0">
              <circle cx="12" cy="12" r="12" fill="#c4c4c4" />
              <circle cx="12" cy="9" r="4.500" fill="#383838" />
              <path d="M4.500 18c1-3 4-4 7.500-4s6.500 1 7.500 4c-2 2.500-4.500 3.500-7.500 3.500s-5.500-1-7.500-3.500z" fill="#383838" />
            </svg>
            <span className="ml-[18px]">RP</span>
            <Caret className="ml-[14px]" />
          </ToolBtn>
          <ToolBtn className="ml-[8px] w-[62px] justify-center">
            <svg viewBox="0 0 30 22" className="w-[30px] h-[22px]">
              <path d="M7 22Q0 22 0 16 0 11 5 10 7 4 13 2 19 0 22 8 29 9 29 16 29 22 23 22Z" fill="currentColor" />
            </svg>
          </ToolBtn>
          <ToolBtn className="ml-[8px] w-[60px] h-[40px] mt-[1px] justify-center">
            <svg viewBox="0 0 28 24" className="w-[28px] h-[24px]" fill="none" stroke="currentColor" strokeWidth="1.8">
              <circle cx="4.500" cy="5" r="3.500" />
              <circle cx="23" cy="5" r="3.500" />
              <circle cx="23" cy="19" r="3.500" />
              <path d="M8 5H19.500M10 5Q14 5 14 11 14 19 19.500 19" />
            </svg>
          </ToolBtn>
        </div>
        <div className="flex items-start gap-[2px]">
          <ToolBtn className="w-[62px] justify-center rounded-r-none">
            <svg viewBox="0 0 16 24" className="w-[16px] h-[24px]">
              <path d="M0 0L16 12L0 24Z" fill="currentColor" />
            </svg>
          </ToolBtn>
          <ToolBtn className="w-[62px] justify-center rounded-none gap-[6px]">
            <span className="w-[6px] h-[22px] rounded-[2px] bg-[#c4c4c4]" />
            <span className="w-[6px] h-[22px] rounded-[2px] bg-[#c4c4c4]" />
          </ToolBtn>
          <ToolBtn className="w-[60px] justify-center rounded-l-none">
            <svg viewBox="0 0 20 24" className="w-[20px] h-[24px]">
              <path d="M0 1L13 12L0 23Z" fill="#9a9a9a" />
              <rect x="16" y="1" width="3" height="22" fill="#c4c4c4" />
            </svg>
          </ToolBtn>
        </div>
        <div className="flex items-start justify-end pr-[14px] gap-[8px]">
          <ToolBtn className="w-[61px] justify-center">
            <History className="w-[28px] h-[28px]" strokeWidth={2} />
          </ToolBtn>
          <ToolBtn className="w-[62px] justify-center">
            <ThinFind />
          </ToolBtn>
          <ToolBtn className="w-[158px] justify-between pl-[6px] pr-[7px]">
            <span>Layers</span>
            <Caret />
          </ToolBtn>
          <ToolBtn className="w-[158px] justify-between pl-[6px] pr-[7px]">
            <span>Layout</span>
            <Caret />
          </ToolBtn>
        </div>
      </div>

      <div className="flex-1 flex min-h-0">
        <div className="w-[2288px] shrink-0 flex flex-col gap-[4px]">
          <div className="h-[1019px] shrink-0 flex gap-[5px]">
            <Hierarchy />
            <ScenePanel />
          </div>
          <ProjectPanel />
        </div>
        <div className="w-[4px] shrink-0 bg-[#191919]" />
        <Inspector />
      </div>

      <div className="h-[42px] shrink-0 flex items-center text-[#e8b53e] text-[23.66px] pl-[4px]">
        <svg viewBox="0 0 28 28" className="w-[28px] h-[28px] shrink-0">
          <path d="M14 1L27 27H1Z" fill="#f0bd48" />
          <path d="M12.500 9H15.500L15 20H13ZM12.500 22H15.500V25H12.500Z" fill="#1a1a1a" />
        </svg>
        <span className="ml-[7px]">Assets/Scripts/CompassManager.cs(48,12): warning CS0414: The field 'CompassManager.lastCompassUpdateTime' is assigned but its value is never used</span>
        <div className="flex-1" />
        <div className="h-full flex text-[#bcbcbc]">
          <div className="w-[52px] border-l border-[#2e2e2e] flex items-center justify-center relative">
            <Bug className="w-[30px] h-[32px]" fill="currentColor" strokeWidth={1.5} />
            <Slash />
          </div>
          <div className="w-[52px] border-l border-[#2e2e2e] flex items-center justify-center relative">
            <Database className="w-[28px] h-[32px]" fill="currentColor" stroke="#191919" strokeWidth={1.5} />
            <Slash />
          </div>
          <div className="w-[52px] border-l border-[#2e2e2e] flex items-center justify-center relative">
            <RefreshCw className="w-[28px] h-[32px]" strokeWidth={2} />
            <Slash />
          </div>
          <div className="w-[48px] border-l border-[#2e2e2e] flex items-center justify-center">
            <svg viewBox="0 0 28 34" className="w-[28px] h-[34px]" fill="none" stroke="currentColor" strokeWidth="2">
              <ellipse cx="14" cy="17" rx="13" ry="16" />
              <path d="M8 17L12 22L20 12" strokeWidth="2.4" />
            </svg>
          </div>
        </div>
      </div>
    </div>
  );
}
